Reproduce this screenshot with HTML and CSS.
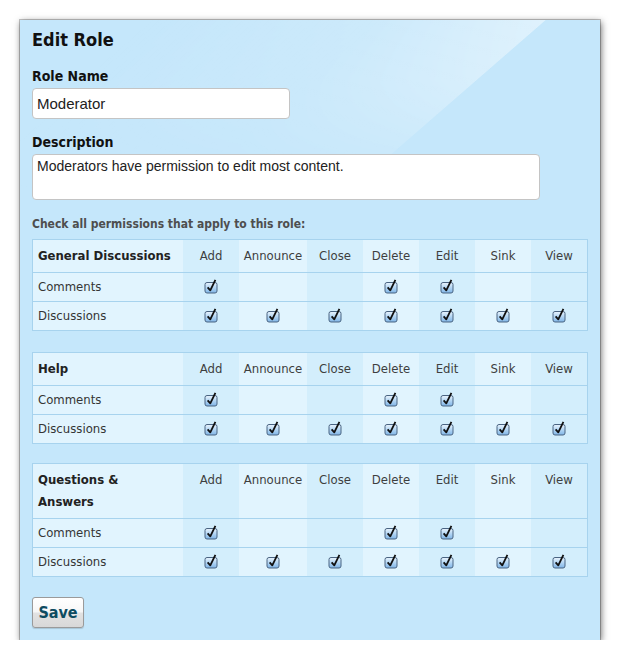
FILE: index.html
```html
<!DOCTYPE html>
<html>
<head>
<meta charset="utf-8">
<link rel="stylesheet" href="styles.css">
</head>
<body>
<svg class="defs" width="0" height="0" aria-hidden="true">
  <defs>
    <linearGradient id="cbg" x1="0" y1="0" x2="0" y2="1">
      <stop offset="0" stop-color="#eaf4fd"/>
      <stop offset="0.5" stop-color="#b3d6f4"/>
      <stop offset="1" stop-color="#7fb4e6"/>
    </linearGradient>
    <symbol id="cb" viewBox="0 0 14 16">
      <rect x="1" y="4.5" width="12" height="10.5" rx="2" fill="url(#cbg)" stroke="#4a6482"/>
      <path d="M3.6 9.3 L6.3 12.4 L11.4 1.8" fill="none" stroke="#111" stroke-width="1.8" stroke-linejoin="round"/>
    </symbol>
  </defs>
</svg>
<div class="panel">
  <h1 class="title">Edit Role</h1>
  <label class="label">Role Name</label>
  <input class="text-input" type="text" value="Moderator">
  <label class="label label-desc">Description</label>
  <textarea class="textarea">Moderators have permission to edit most content.</textarea>
  <p class="hint">Check all permissions that apply to this role:</p>

  <table class="perm">
    <colgroup><col class="c-name"><col class="c-n"><col class="c-w"><col class="c-n"><col class="c-n"><col class="c-n"><col class="c-n"><col class="c-n"></colgroup>
    <tr><th class="cat">General Discussions</th><th>Add</th><th>Announce</th><th>Close</th><th>Delete</th><th>Edit</th><th>Sink</th><th>View</th></tr>
    <tr><td class="name">Comments</td><td><svg class="cb"><use href="#cb"/></svg></td><td></td><td></td><td><svg class="cb"><use href="#cb"/></svg></td><td><svg class="cb"><use href="#cb"/></svg></td><td></td><td></td></tr>
    <tr><td class="name">Discussions</td><td><svg class="cb"><use href="#cb"/></svg></td><td><svg class="cb"><use href="#cb"/></svg></td><td><svg class="cb"><use href="#cb"/></svg></td><td><svg class="cb"><use href="#cb"/></svg></td><td><svg class="cb"><use href="#cb"/></svg></td><td><svg class="cb"><use href="#cb"/></svg></td><td><svg class="cb"><use href="#cb"/></svg></td></tr>
  </table>

  <table class="perm">
    <colgroup><col class="c-name"><col class="c-n"><col class="c-w"><col class="c-n"><col class="c-n"><col class="c-n"><col class="c-n"><col class="c-n"></colgroup>
    <tr><th class="cat">Help</th><th>Add</th><th>Announce</th><th>Close</th><th>Delete</th><th>Edit</th><th>Sink</th><th>View</th></tr>
    <tr><td class="name">Comments</td><td><svg class="cb"><use href="#cb"/></svg></td><td></td><td></td><td><svg class="cb"><use href="#cb"/></svg></td><td><svg class="cb"><use href="#cb"/></svg></td><td></td><td></td></tr>
    <tr><td class="name">Discussions</td><td><svg class="cb"><use href="#cb"/></svg></td><td><svg class="cb"><use href="#cb"/></svg></td><td><svg class="cb"><use href="#cb"/></svg></td><td><svg class="cb"><use href="#cb"/></svg></td><td><svg class="cb"><use href="#cb"/></svg></td><td><svg class="cb"><use href="#cb"/></svg></td><td><svg class="cb"><use href="#cb"/></svg></td></tr>
  </table>

  <table class="perm">
    <colgroup><col class="c-name"><col class="c-n"><col class="c-w"><col class="c-n"><col class="c-n"><col class="c-n"><col class="c-n"><col class="c-n"></colgroup>
    <tr><th class="cat">Questions &amp;<br>Answers</th><th>Add</th><th>Announce</th><th>Close</th><th>Delete</th><th>Edit</th><th>Sink</th><th>View</th></tr>
    <tr><td class="name">Comments</td><td><svg class="cb"><use href="#cb"/></svg></td><td></td><td></td><td><svg class="cb"><use href="#cb"/></svg></td><td><svg class="cb"><use href="#cb"/></svg></td><td></td><td></td></tr>
    <tr><td class="name">Discussions</td><td><svg class="cb"><use href="#cb"/></svg></td><td><svg class="cb"><use href="#cb"/></svg></td><td><svg class="cb"><use href="#cb"/></svg></td><td><svg class="cb"><use href="#cb"/></svg></td><td><svg class="cb"><use href="#cb"/></svg></td><td><svg class="cb"><use href="#cb"/></svg></td><td><svg class="cb"><use href="#cb"/></svg></td></tr>
  </table>

  <button class="save" type="button">Save</button>
</div>
</body>
</html>
```

FILE: styles.css
```css
html, body {
  margin: 0;
  padding: 0;
  background: #ffffff;
}

.defs {
  display: block;
  width: 0;
  height: 0;
  overflow: hidden;
}

.panel {
  position: relative;
  isolation: isolate;
  box-sizing: border-box;
  width: 580px;
  height: 620px;
  margin: 20px 0 0 20px;
  padding: 8px 12px 0 12px;
  display: flex;
  flex-direction: column;
  align-items: flex-start;
  background-color: #c5e7fb;
  box-shadow: 0 0 0 1px rgba(0,0,0,0.22), 1px 2px 7px rgba(0,0,0,0.6);
  font-family: "DejaVu Sans Condensed", "DejaVu Sans", sans-serif;
  font-stretch: condensed;
}

/* glossy diagonal highlight in the top area */
.panel::before {
  content: "";
  position: absolute;
  left: 0;
  top: 0;
  right: 0;
  bottom: 0;
  z-index: -1;
  background-image: linear-gradient(139deg, rgba(255,255,255,0) 10%, rgba(255,255,255,0.14) 28%, rgba(255,255,255,0.45) 40.6%, rgba(255,255,255,0) 40.7%);
  -webkit-mask-image: linear-gradient(to bottom, #000 0, rgba(0,0,0,0.75) 60px, rgba(0,0,0,0.25) 130px, rgba(0,0,0,0) 175px);
  mask-image: linear-gradient(to bottom, #000 0, rgba(0,0,0,0.75) 60px, rgba(0,0,0,0.25) 130px, rgba(0,0,0,0) 175px);
}

.title {
  margin: 0;
  font-size: 18px;
  line-height: 24px;
  font-weight: bold;
  color: #111;
}

.label {
  display: block;
  margin-top: 15px;
  font-size: 14px;
  line-height: 18px;
  font-weight: bold;
  color: #111;
}

.label-desc {
  margin-top: 14px;
}

.text-input {
  box-sizing: border-box;
  margin: 3px 0 0 0;
  width: 258px;
  height: 31px;
  padding: 0 4px;
  border: 1px solid #c4c4c4;
  border-radius: 4px;
  background: #fff;
  font-family: "Liberation Sans", Arial, sans-serif;
  font-size: 15px;
  color: #222;
  outline: none;
}

.textarea {
  box-sizing: border-box;
  margin: 3px 0 0 0;
  width: 508px;
  height: 46px;
  padding: 3px 4px;
  border: 1px solid #c4c4c4;
  border-radius: 4px;
  background: #fff;
  font-family: "Liberation Sans", Arial, sans-serif;
  font-size: 14px;
  color: #222;
  resize: none;
  outline: none;
}

.hint {
  margin: 17px 0 0 0;
  font-size: 12px;
  line-height: 14px;
  font-weight: bold;
  color: #4e4e4e;
}

.perm {
  margin-top: 8px;
  width: 556px;
  table-layout: fixed;
  border-collapse: separate;
  border-spacing: 0;
  border: 1px solid #a7d3ee;
  font-size: 13px;
  color: #353535;
}

.perm + .perm {
  margin-top: 21px;
}

.perm + .perm + .perm {
  margin-top: 19px;
}

.c-name { width: 150px; }
.c-n { width: 56px; }
.c-w { width: 68px; }

.perm th,
.perm td {
  background: #e1f4fe;
  text-align: center;
  padding: 0;
}

.perm th:nth-child(even),
.perm td:nth-child(even) {
  background: #d3eefc;
}

.perm th {
  vertical-align: top;
  padding: 5px 0;
  line-height: 22px;
  font-weight: normal;
  color: #3e3e3e;
}

.perm th.cat {
  text-align: left;
  padding-left: 5px;
  padding-right: 4px;
  font-weight: bold;
  color: #222;
}

.perm td {
  border-top: 1px solid #a7d3ee;
  padding: 3px 0;
  line-height: 22px;
  height: 22px;
  vertical-align: middle;
}

.perm td.name {
  text-align: left;
  padding-left: 5px;
}

.cb {
  width: 14px;
  height: 16px;
  vertical-align: middle;
  position: relative;
  top: -2px;
}

.save {
  box-sizing: border-box;
  margin-top: 20px;
  width: 52px;
  height: 31px;
  padding: 0;
  border: 1px solid #9a9a9a;
  border-radius: 3px;
  background: linear-gradient(#ffffff 0%, #f7f7f7 48%, #e2e2e2 52%, #d8d8d8 100%);
  box-shadow: 0 1px 1px rgba(0,0,0,0.15);
  font-family: "DejaVu Sans Condensed", "DejaVu Sans", sans-serif;
  font-stretch: condensed;
  font-size: 16px;
  font-weight: bold;
  color: #0d4b60;
}
```
